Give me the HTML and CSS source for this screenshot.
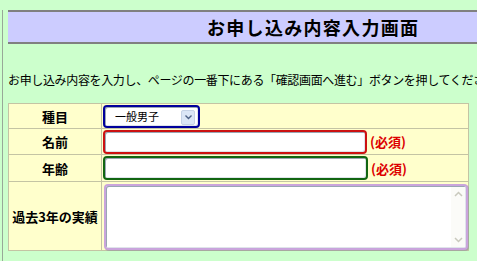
FILE: index.html
```html
<!DOCTYPE html>
<html lang="ja">
  <head>
    <meta charset="UTF-8" />
    <title>お申し込み内容入力画面</title>
    <link rel="stylesheet" href="styles.css">
  </head>
  <body>
    <div class="frame">
      <h1 class="page-title">お申し込み内容入力画面</h1>

      <p class="lead">お申し込み内容を入力し、ページの一番下にある「確認画面へ進む」ボタンを押してください。</p>

      <table class="entry-form">
        <tr class="row-kind">
          <th>種目</th>
          <td>
            <span class="select-wrap">
              <select class="field field-blue" name="kind">
                <option>一般男子</option>
                <option>一般女子</option>
              </select>
              <span class="select-arrow">
                <svg width="7" height="5" viewBox="0 0 7 5"><path d="M0.5 0.5 L3.5 3.5 L6.5 0.5" fill="none" stroke="#4d6185" stroke-width="1.4"/></svg>
              </span>
            </span>
          </td>
        </tr>
        <tr class="row-name">
          <th>名前</th>
          <td>
            <input class="field field-red text-name" type="text" name="name" />
            <span class="required">(必須)</span>
          </td>
        </tr>
        <tr class="row-age">
          <th>年齢</th>
          <td>
            <input class="field field-green text-age" type="text" name="age" />
            <span class="required">(必須)</span>
          </td>
        </tr>
        <tr class="row-history">
          <th>過去3年の実績</th>
          <td>
            <div class="area-wrap">
              <textarea class="field field-purple" name="history"></textarea>
              <div class="fake-scroll">
                <svg width="9" height="6" viewBox="0 0 9 6"><path d="M1 5 L4.5 1.5 L8 5" fill="none" stroke="#c9c9bd" stroke-width="1.5"/></svg>
                <svg width="9" height="6" viewBox="0 0 9 6"><path d="M1 1 L4.5 4.5 L8 1" fill="none" stroke="#c9c9bd" stroke-width="1.5"/></svg>
              </div>
            </div>
          </td>
        </tr>
      </table>
    </div>
  </body>
</html>
```

FILE: styles.css
```css
:root {
  --page-bg: #ccffcc;
  --title-bg: #ccccff;
  --cell-bg: #ffffcc;
  --cell-line: #c4c4a4;
  --required: #dd0000;
}

body {
  margin: 0;
  background-color: var(--page-bg);
  font-family: "Noto Sans CJK JP", "Noto Sans", sans-serif;
  color: #000;
  overflow: hidden;
}

.frame {
  margin-left: 2px;
  border-left: 1px solid #98a898;
  padding-left: 5px;
  min-height: 100vh;
}

.page-title {
  margin: 10px 0 0;
  height: 30px;
  line-height: 30px;
  border-top: 2px solid #808080;
  border-bottom: 2px solid #808080;
  background-color: var(--title-bg);
  font-size: 18px;
  font-weight: bold;
  letter-spacing: 1.3px;
  padding-left: 199px;
  white-space: nowrap;
}

.lead {
  margin: 28px 0 0;
  font-size: 12px;
  line-height: 16px;
  letter-spacing: -0.35px;
  white-space: nowrap;
  overflow: hidden;
}

.entry-form {
  margin-top: 15px;
  width: 461px;
  border-collapse: collapse;
  background-color: var(--cell-bg);
  border: 1px solid #a8a890;
}

.entry-form th,
.entry-form td {
  border: 1px solid var(--cell-line);
  padding: 0 0 0 1px;
}

.entry-form th {
  width: 92px;
  font-size: 13px;
  font-weight: bold;
  text-align: center;
  white-space: nowrap;
  padding: 0;
}

.row-kind { height: 25px; }
.row-name { height: 26px; }
.row-age { height: 27px; }
.row-history { height: 69px; }

.entry-form td {
  vertical-align: middle;
  font-size: 0;
}

/* coloured focus-style rings round the inputs */
.field {
  box-sizing: border-box;
  border: 2px solid #000;
  border-radius: 4px;
  background-color: #fff;
  box-shadow: inset 1px 1px 0 #9aa6b4, inset -1px -1px 0 #dfe4ea;
  font-family: inherit;
  outline: none;
  margin: 0;
  vertical-align: middle;
}

.field-blue { border-color: #00009c; }
.field-red { border-color: #cc1111; }
.field-green { border-color: #116611; }
.field-purple { border-color: #c9a4dc; }

.select-wrap {
  position: relative;
  display: inline-block;
}

.select-wrap select {
  appearance: none;
  -webkit-appearance: none;
  width: 97px;
  height: 23px;
  padding: 0 0 0 10px;
  font-size: 11px;
  color: #000;
}

.select-arrow {
  position: absolute;
  right: 5px;
  top: 5px;
  width: 12px;
  height: 13px;
  border: 1px solid #c5d2e6;
  border-radius: 2px;
  background-color: #dbe6f6;
  display: flex;
  align-items: center;
  justify-content: center;
  pointer-events: none;
}

.text-name,
.text-age {
  height: 24px;
  padding: 0 4px;
  font-size: 12px;
}

.text-name { width: 264px; }
.text-age { width: 265px; }

.required {
  display: inline-block;
  vertical-align: middle;
  margin-left: 3px;
  font-size: 13px;
  font-weight: bold;
  color: var(--required);
}

.area-wrap {
  position: relative;
  width: 364px;
  height: 66px;
  margin: 1px 0 0 1px;
}

.area-wrap textarea {
  display: block;
  width: 364px;
  height: 66px;
  resize: none;
  overflow: hidden;
  padding: 3px 20px 3px 4px;
  font-size: 12px;
  box-shadow: inset 1px 1px 0 #9aa6b4, inset -1px -1px 0 #dfe4ea, 1px 1px 0 #a8a8a0;
}

.fake-scroll {
  position: absolute;
  top: 3px;
  right: 3px;
  bottom: 3px;
  width: 14px;
  background-color: #fbfbf8;
  display: flex;
  flex-direction: column;
  justify-content: space-between;
  align-items: center;
  padding: 4px 0;
  box-sizing: border-box;
  pointer-events: none;
}
```
